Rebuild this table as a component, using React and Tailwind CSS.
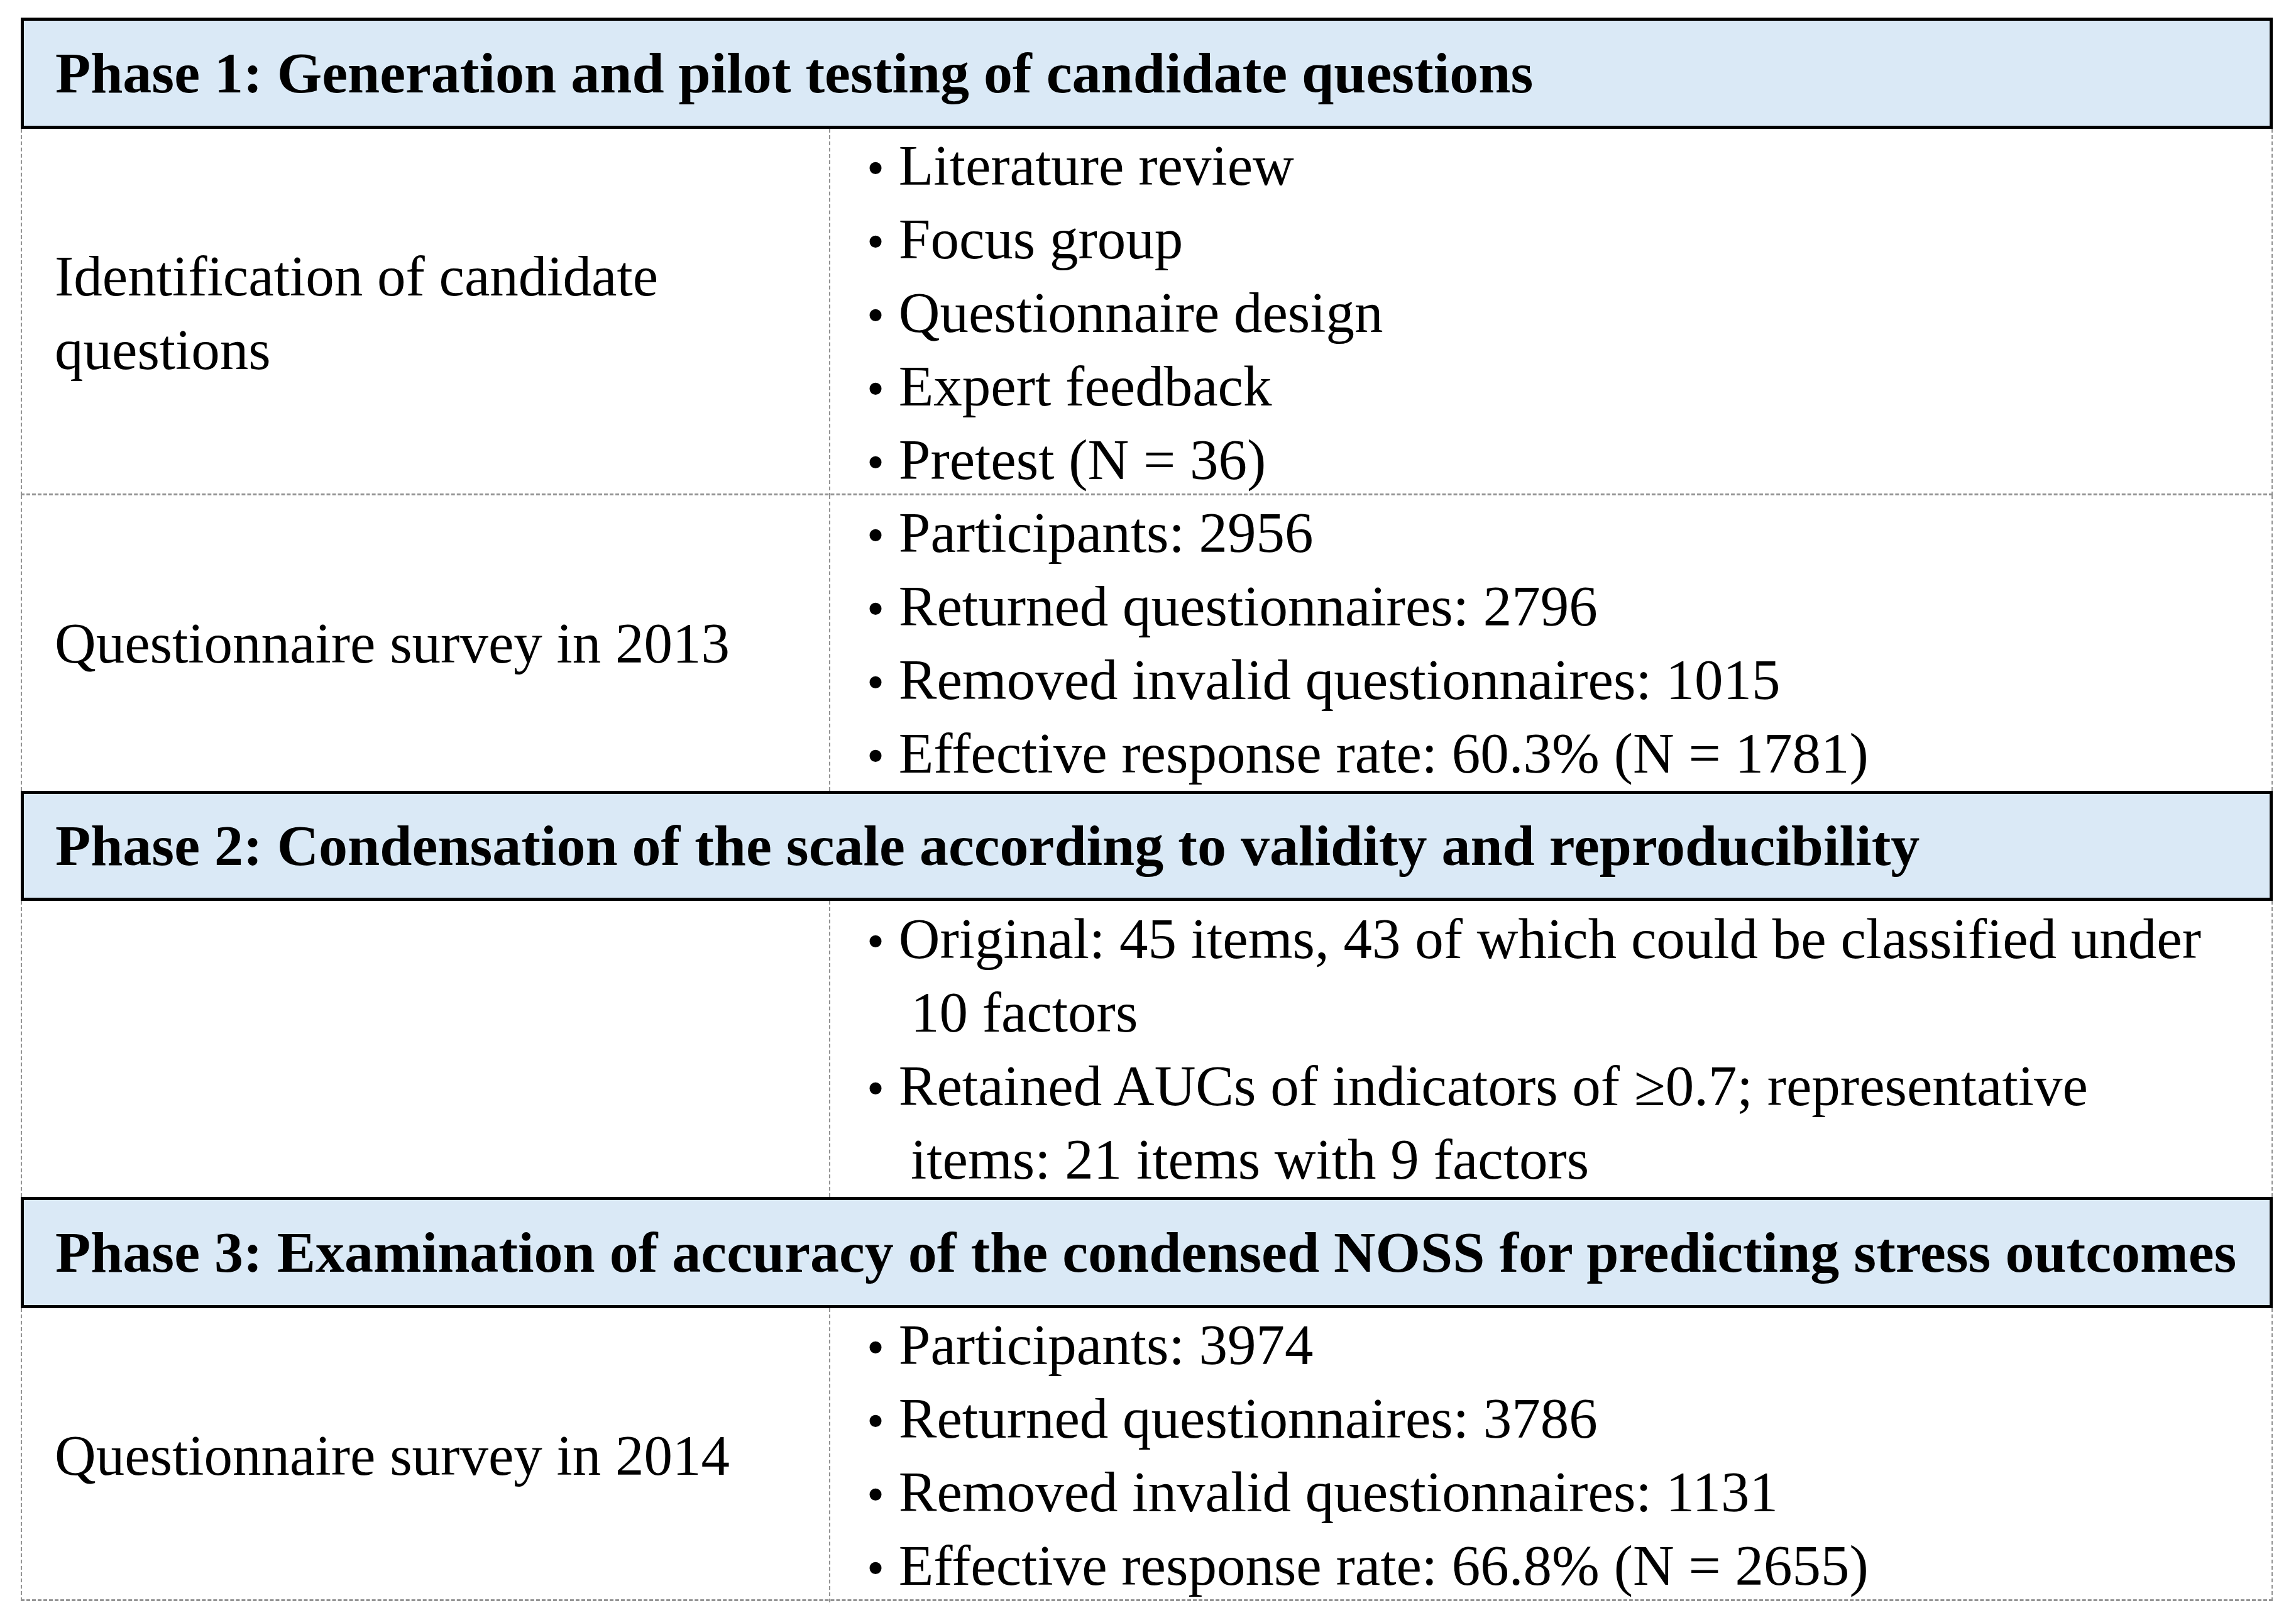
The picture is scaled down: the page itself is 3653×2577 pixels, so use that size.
const SECTIONS = [
  {
    title: "Phase 1: Generation and pilot testing of candidate questions",
    head: "h-[177px]",
    rows: [
      {
        label: "Identification of candidate questions",
        h: "h-[583px]",
        last: false,
        items: [["Literature review"], ["Focus group"], ["Questionnaire design"], ["Expert feedback"], ["Pretest (N = 36)"]],
      },
      {
        label: "Questionnaire survey in 2013",
        h: "h-[470px]",
        last: true,
        items: [
          ["Participants: 2956"],
          ["Returned questionnaires: 2796"],
          ["Removed invalid questionnaires: 1015"],
          ["Effective response rate: 60.3% (N = 1781)"],
        ],
      },
    ],
  },
  {
    title: "Phase 2: Condensation of the scale according to validity and reproducibility",
    head: "h-[175px]",
    rows: [
      {
        label: "",
        h: "h-[471px]",
        last: true,
        items: [
          ["Original: 45 items, 43 of which could be classified under", "10 factors"],
          ["Retained AUCs of indicators of \u22650.7; representative", "items: 21 items with 9 factors"],
        ],
      },
    ],
  },
  {
    title: "Phase 3: Examination of accuracy of the condensed NOSS for predicting stress outcomes",
    head: "h-[177px]",
    rows: [
      {
        label: "Questionnaire survey in 2014",
        h: "h-[466px]",
        last: false,
        items: [
          ["Participants: 3974"],
          ["Returned questionnaires: 3786"],
          ["Removed invalid questionnaires: 1131"],
          ["Effective response rate: 66.8% (N = 2655)"],
        ],
      },
    ],
  },
];

function PhaseHeader({ title, head }) {
  return (
    <div className={`${head} flex items-center border-[5px] border-black bg-[#dae9f6] pl-[50px] whitespace-nowrap text-[92px] font-bold`}>
      {title}
    </div>
  );
}

function BodyRow({ row }) {
  return (
    <div
      className={`${row.h} grid grid-cols-[1286px_1fr] border-x-2 border-dashed border-[#939393] ${
        row.last ? "" : "border-b-[3px]"
      }`}
    >
      {/* label cell */}
      <div className="flex items-center border-r-2 border-dashed border-[#939393] pl-[52px] pr-[60px]">
        <p>{row.label}</p>
      </div>

      {/* bullet cell */}
      <div className="flex items-center pl-[58px]">
        <ul>
          {row.items.map((lines) => (
            <li key={lines[0]} className="pl-[70px] indent-[-70px] whitespace-nowrap">
              <span className="text-[80px] leading-none">{"\u2022"}</span>
              {" "}
              {lines[0]}
              {lines[1] && (
                <>
                  <br />
                  {lines[1]}
                </>
              )}
            </li>
          ))}
        </ul>
      </div>
    </div>
  );
}

export default function App() {
  return (
    <div className="min-h-screen bg-white pt-[28px] pl-[33px]">
      <div className="w-[3583px] font-['Liberation_Serif','Times_New_Roman',serif] text-[91px] leading-[117px] text-black">
        {SECTIONS.map((section) => (
          <div key={section.title}>
            <PhaseHeader title={section.title} head={section.head} />
            {section.rows.map((row, i) => (
              <BodyRow key={i} row={row} />
            ))}
          </div>
        ))}
      </div>
    </div>
  );
}
